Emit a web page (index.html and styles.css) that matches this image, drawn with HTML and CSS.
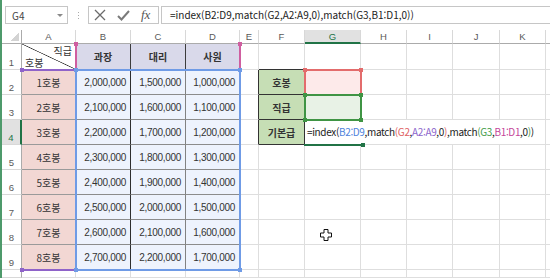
FILE: index.html
```html
<!DOCTYPE html>
<html lang="ko">
<head>
<meta charset="UTF-8" />
<title>기본급 조회</title>
<link rel="stylesheet" href="styles.css">
</head>
<body>
<div class="app">
  <!-- formula bar -->
  <div class="fbar">
    <div class="namebox"><span>G4</span><span class="caret"></span></div>
    <div class="grip"><span></span></div>
    <div class="btns">
      <svg class="ico-x" width="12" height="12" viewBox="0 0 12 12"><path d="M1 1L11 11M11 1L1 11" stroke="#6b6b6b" stroke-width="1.3" fill="none"/></svg>
      <svg class="ico-ok" width="13" height="11" viewBox="0 0 13 11"><path d="M1 6L4.5 9.5L12 1" stroke="#7a7a7a" stroke-width="2" fill="none"/></svg>
      <span class="fx">fx</span>
    </div>
    <div class="formula ftext">=index(B2:D9,match(G2,A2:A9,0),match(G3,B1:D1,0))</div>
  </div>

  <div class="sheet">
    <div class="cells">
      <!-- column headers -->
      <div class="corner"></div>
      <div class="ch">A</div><div class="ch">B</div><div class="ch">C</div><div class="ch">D</div>
      <div class="ch">E</div><div class="ch">F</div><div class="ch on">G</div><div class="ch">H</div>
      <div class="ch">I</div><div class="ch">J</div><div class="ch">K</div><div class="ch end"></div>

      <!-- row 1 -->
      <div class="rh">1</div>
      <div class="diag"><span class="d-top">직급</span><span class="d-bot">호봉</span></div>
      <div class="th b">과장</div><div class="th">대리</div><div class="th">사원</div>
      <div></div><div class="top"></div><div></div><div></div><div></div><div></div><div></div><div class="end"></div>

      <!-- row 2 -->
      <div class="rh">2</div>
      <div class="lvl">1호봉</div>
      <div class="num b">2,000,000</div><div class="num">1,500,000</div><div class="num">1,000,000</div>
      <div class="edge"></div><div class="lab">호봉</div><div class="gr"></div>
      <div></div><div></div><div></div><div></div><div class="end"></div>

      <!-- row 3 -->
      <div class="rh">3</div>
      <div class="lvl">2호봉</div>
      <div class="num b">2,100,000</div><div class="num">1,600,000</div><div class="num">1,100,000</div>
      <div class="edge"></div><div class="lab">직급</div><div class="gg"></div>
      <div></div><div></div><div></div><div></div><div class="end"></div>

      <!-- row 4 -->
      <div class="rh on">4</div>
      <div class="lvl">3호봉</div>
      <div class="num b">2,200,000</div><div class="num">1,700,000</div><div class="num">1,200,000</div>
      <div class="edge"></div><div class="lab">기본급</div>
      <div class="edit ftext">=index(<span class="k-blue">B2:D9</span>,match<span class="k-red">(G2</span>,<span class="k-purple">A2:A9</span>,0<span class="k-red">)</span>,match<span class="k-green">(G3</span>,<span class="k-pink">B1:D1</span>,0<span class="k-green">)</span>)</div>
      <div class="end"></div>

      <!-- row 5 -->
      <div class="rh">5</div>
      <div class="lvl">4호봉</div>
      <div class="num b">2,300,000</div><div class="num">1,800,000</div><div class="num">1,300,000</div>
      <div></div><div></div><div></div><div></div><div></div><div></div><div></div><div class="end"></div>

      <!-- row 6 -->
      <div class="rh">6</div>
      <div class="lvl">5호봉</div>
      <div class="num b">2,400,000</div><div class="num">1,900,000</div><div class="num">1,400,000</div>
      <div></div><div></div><div></div><div></div><div></div><div></div><div></div><div class="end"></div>

      <!-- row 7 -->
      <div class="rh">7</div>
      <div class="lvl">6호봉</div>
      <div class="num b">2,500,000</div><div class="num">2,000,000</div><div class="num">1,500,000</div>
      <div></div><div></div><div></div><div></div><div></div><div></div><div></div><div class="end"></div>

      <!-- row 8 -->
      <div class="rh">8</div>
      <div class="lvl">7호봉</div>
      <div class="num b">2,600,000</div><div class="num">2,100,000</div><div class="num">1,600,000</div>
      <div></div><div></div><div></div><div></div><div></div><div></div><div></div><div class="end"></div>

      <!-- row 9 -->
      <div class="rh">9</div>
      <div class="lvl">8호봉</div>
      <div class="num b">2,700,000</div><div class="num">2,200,000</div><div class="num">1,700,000</div>
      <div></div><div></div><div></div><div></div><div></div><div></div><div></div><div class="end"></div>

      <!-- row 10 (cut by the window) -->
      <div class="rh last">10</div>
      <div></div><div></div><div></div><div></div><div></div><div></div><div></div>
      <div></div><div></div><div></div><div></div><div class="end"></div>
    </div>

    <!-- reference highlights drawn over the cells -->
    <div class="marks">
      <div class="ref ref-pink"><i class="tl"></i><i class="tr"></i></div>
      <div class="ref ref-purple"><i class="tl"></i><i class="bl"></i></div>
      <div class="ref ref-blue"><i class="tl"></i><i class="tr"></i><i class="bl"></i><i class="br"></i></div>
      <div class="ref ref-red"><i class="tl"></i><i class="tr"></i><i class="bl"></i><i class="br"></i></div>
      <div class="ref ref-green"><i class="tl"></i><i class="tr"></i><i class="bl"></i><i class="br"></i></div>
      <div class="active"><i class="br"></i></div>
    </div>
  </div>

  <svg class="cursor" width="12" height="12" viewBox="0 0 12 12"><path d="M4 0.5H8V4H11.5V8H8V11.5H4V8H0.5V4H4Z" fill="#fff" stroke="#111" stroke-width="1"/></svg>
</div>
</body>
</html>
```

FILE: styles.css
```css
body {
  margin: 0;
  background: #fff;
  color: #333;
  font-family: "Noto Sans CJK KR", "Noto Sans", sans-serif;
}

.app {
  position: relative;
  width: 548px;
  height: 278px;
  border-left: 2px solid #4e9a6b;
  overflow: hidden;
}

/* formula bar */
.fbar {
  height: 30px;
  padding-top: 6px;
  box-sizing: border-box;
  display: flex;
  align-items: flex-start;
}

.namebox {
  margin-left: 3px;
  width: 63px;
  height: 18px;
  box-sizing: border-box;
  border: 1px solid #c6c6c6;
  display: flex;
  align-items: center;
  justify-content: space-between;
  padding: 0 4px 0 6px;
  font-size: 10px;
  color: #444;
}

.caret {
  width: 0;
  height: 0;
  border-left: 3px solid transparent;
  border-right: 3px solid transparent;
  border-top: 3px solid #8a8a8a;
}

.grip {
  width: 20px;
  height: 18px;
  display: flex;
  align-items: center;
  justify-content: center;
}

.grip span {
  width: 1px;
  height: 7px;
  background: repeating-linear-gradient(#aaa 0 1px, transparent 1px 3px);
}

.btns {
  width: 71px;
  height: 18px;
  box-sizing: border-box;
  border: 1px solid #c6c6c6;
  display: flex;
  align-items: center;
  padding-left: 5px;
}

.ico-ok {
  margin-left: 11px;
}

.fx {
  margin-left: 11px;
  font-family: "Liberation Serif", serif;
  font-style: italic;
  font-size: 13px;
  color: #555;
  line-height: 14px;
}

/* shared look of the formula text */
.ftext {
  font-family: "Noto Sans CJK KR", sans-serif;
  font-size: 10px;
  color: #222;
  white-space: nowrap;
}

.formula {
  flex: 1;
  margin-left: 2px;
  height: 18px;
  box-sizing: border-box;
  border: 1px solid #c6c6c6;
  border-right: none;
  padding-left: 8px;
  line-height: 16px;
}

/* sheet grid */
.sheet {
  position: relative;
  height: 248px;
}

.cells,
.marks {
  display: grid;
  grid-template-columns: 20px 54px 55px 55px 54px 19px 46px 56px 46px 46px 47px 46px 1fr;
  grid-template-rows: 14px 26px repeat(8, 25px) 1fr;
  height: 100%;
}

.cells > div {
  box-sizing: border-box;
  border-right: 1px solid #dedede;
  border-bottom: 1px solid #dedede;
  display: flex;
  align-items: center;
  justify-content: center;
  font-size: 10px;
  white-space: nowrap;
  overflow: hidden;
  min-width: 0;
}

.cells > .end {
  border-right: none;
}

.cells > .corner {
  border-right-color: #ababab;
  border-bottom-color: #ababab;
  position: relative;
}

.corner::after {
  content: "";
  position: absolute;
  right: 2px;
  bottom: 2px;
  width: 8px;
  height: 8px;
  background: linear-gradient(to bottom right, transparent 50%, #d3d3d3 50%);
}

.cells > .ch {
  border-right-color: #d8d8d8;
  border-bottom-color: #ababab;
  color: #595959;
  font-family: "Liberation Sans", sans-serif;
  font-size: 9.5px;
}

.cells > .rh {
  border-right-color: #ababab;
  border-bottom-color: #d8d8d8;
  align-items: flex-end;
  padding-bottom: 1px;
  color: #595959;
  font-family: "Liberation Sans", sans-serif;
  font-size: 9.5px;
}

.cells > .rh.last {
  align-items: flex-start;
  padding: 4px 0 0;
  line-height: 11px;
}

.cells > .on {
  background: #e1e1e1;
  color: #217346;
}

.cells > .ch.on {
  border-bottom: 2px solid #217346;
}

.cells > .rh.on {
  border-right: 2px solid #217346;
}

/* table A1:D9 */
.cells > .diag {
  flex-direction: column;
  align-items: stretch;
  justify-content: space-between;
  padding: 0 3px 1px;
  border-right-color: #444;
  border-bottom-color: #555;
  background: linear-gradient(to top right, transparent calc(50% - 0.7px), #333 50%, transparent calc(50% + 0.7px));
}

.d-top {
  align-self: flex-end;
  line-height: 13px;
}

.d-bot {
  align-self: flex-start;
  line-height: 12px;
}

.cells > .th {
  background: #d9d9ea;
  font-weight: bold;
  border-right-color: #3c3c3c;
  border-bottom-color: #555;
}

.cells > .lvl {
  background: #f2d7d3;
  border-right-color: #666;
  border-bottom-color: #9a9a9a;
}

.cells > .num {
  background: #eef3fd;
  justify-content: flex-end;
  padding-right: 4px;
  font-family: "Liberation Sans", sans-serif;
  letter-spacing: -0.3px;
  border-right-color: #828282;
  border-bottom-color: #8c8c8c;
}

.cells > .num.b {
  border-right-color: #2e2e2e;
}

/* lookup block F2:G4 */
.cells > .top {
  border-bottom-color: #333;
}

.cells > .edge {
  border-right-color: #333;
}

.cells > .lab {
  background: #c6deb5;
  font-weight: bold;
  border-right-color: #333;
  border-bottom-color: #333;
}

.cells > .gr {
  background: #fdeaea;
}

.cells > .gg {
  background: #e8f2e6;
}

.cells > .edit {
  grid-column: span 5;
  display: block;
  padding-left: 2px;
  line-height: 23px;
  letter-spacing: -0.35px;
  background: #fff;
}

.k-blue { color: #4f83dc; }
.k-red { color: #e0615f; }
.k-purple { color: #8c66cc; }
.k-green { color: #3f9b48; }
.k-pink { color: #c4449a; }

/* formula reference boxes */
.marks {
  position: absolute;
  inset: 0;
  pointer-events: none;
}

.ref {
  position: relative;
  margin: -1px;
  border: 2px solid currentColor;
}

.ref i,
.active i {
  position: absolute;
  width: 4px;
  height: 4px;
  background: currentColor;
}

.tl { left: -3px; top: -3px; }
.tr { right: -3px; top: -3px; }
.bl { left: -3px; bottom: -3px; }
.br { right: -3px; bottom: -3px; }

.ref-pink {
  grid-column: 3 / 6;
  grid-row: 2 / 3;
  color: #cf5ea0;
  border-top-color: transparent;
}

.ref-purple {
  grid-column: 2 / 3;
  grid-row: 3 / 11;
  color: #8f63c9;
  border-left-color: transparent;
}

.ref-blue {
  grid-column: 3 / 6;
  grid-row: 3 / 11;
  color: #6f9be6;
}

.ref-red {
  grid-column: 8 / 9;
  grid-row: 3 / 4;
  color: #e36c6c;
}

.ref-green {
  grid-column: 8 / 9;
  grid-row: 4 / 5;
  color: #3f9444;
}

.active {
  grid-column: 8 / 9;
  grid-row: 5 / 6;
  position: relative;
  margin: 0 -1px -1px -1px;
  border-bottom: 2px solid #217346;
  color: #217346;
}

.cursor {
  position: absolute;
  left: 318px;
  top: 229px;
}
```
